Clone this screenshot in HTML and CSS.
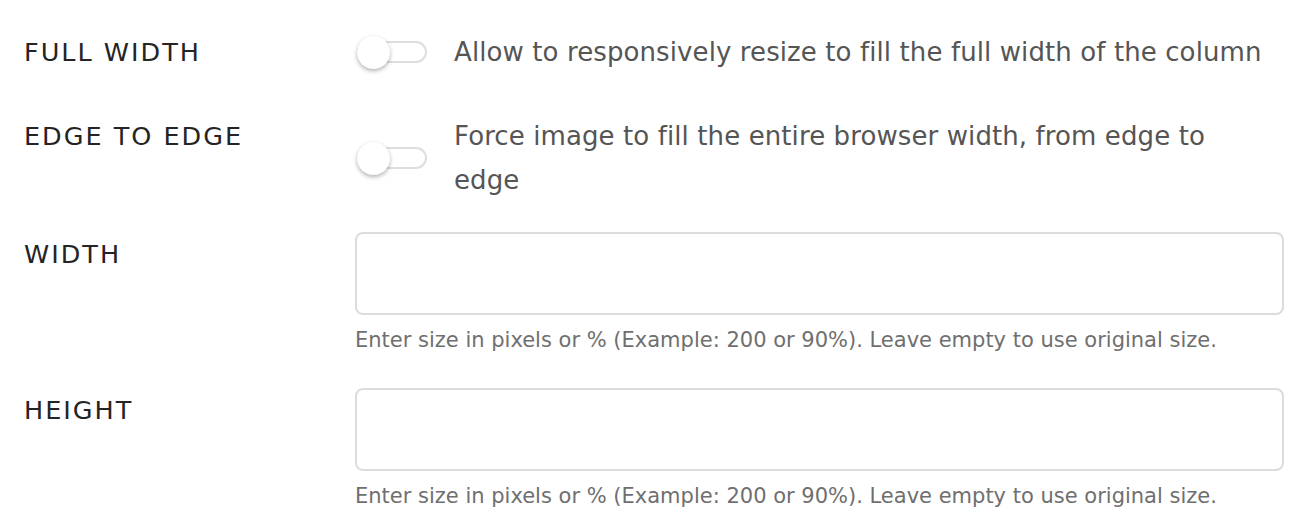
FILE: index.html
```html
<!DOCTYPE html>
<html>
<head>
<meta charset="utf-8">
<link rel="stylesheet" href="styles.css">
</head>
<body>
<div class="form">
  <div class="row row-toggle row-first">
    <div class="label">FULL WIDTH</div>
    <div class="toggle-cell"><span class="toggle"><span class="knob"></span></span></div>
    <div class="desc">Allow to responsively resize to fill the full width of the column</div>
  </div>
  <div class="row row-toggle">
    <div class="label">EDGE TO EDGE</div>
    <div class="toggle-cell"><span class="toggle"><span class="knob"></span></span></div>
    <div class="desc">Force image to fill the entire browser width, from edge to edge</div>
  </div>
  <div class="row row-input">
    <div class="label">WIDTH</div>
    <div class="field">
      <input class="text-input" type="text">
      <div class="help">Enter size in pixels or % (Example: 200 or 90%). Leave empty to use original size.</div>
    </div>
  </div>
  <div class="row row-input">
    <div class="label">HEIGHT</div>
    <div class="field">
      <input class="text-input" type="text">
      <div class="help">Enter size in pixels or % (Example: 200 or 90%). Leave empty to use original size.</div>
    </div>
  </div>
</div>
</body>
</html>
```
FILE: styles.css
```css
html, body {
  margin: 0;
  padding: 0;
  background: #fff;
}
body {
  font-family: "DejaVu Sans", "Open Sans", sans-serif;
}
.form {
  padding: 30px 20px 0 24px;
  display: flex;
  flex-direction: column;
}
.row {
  display: grid;
  grid-template-columns: 331px 99px 1fr;
  align-items: start;
}
.row-toggle + .row-toggle {
  margin-top: 40px;
}
.row-input {
  grid-template-columns: 331px 1fr;
  margin-top: 30px;
}
.row-input + .row-input {
  margin-top: 34px;
}
.label {
  font-size: 25.5px;
  line-height: 44px;
  color: #242424;
  letter-spacing: 2px;
}
.toggle-cell {
  align-self: center;
  display: flex;
  align-items: center;
  height: 34px;
}
.toggle {
  position: relative;
  display: block;
  width: 70px;
  height: 22px;
  margin-left: 2px;
  box-sizing: border-box;
  border: 2px solid #dedede;
  border-radius: 11px;
  background: #fff;
}
.knob {
  position: absolute;
  left: -2px;
  top: -7px;
  width: 33px;
  height: 33px;
  border-radius: 50%;
  background: #fff;
  box-shadow: 0 2px 4px rgba(0,0,0,0.3);
}
.desc {
  font-size: 26px;
  line-height: 44px;
  color: #555;
  letter-spacing: 0.1px;
  padding-right: 16px;
}
.field {
  display: flex;
  flex-direction: column;
}
.text-input {
  display: block;
  box-sizing: border-box;
  width: 100%;
  height: 83px;
  margin: 0;
  border: 2px solid #dcdcdc;
  border-radius: 8px;
  background: #fff;
  outline: none;
}
.help {
  font-size: 21px;
  line-height: 28px;
  margin-top: 11px;
  color: #6f6f6f;
}
```
